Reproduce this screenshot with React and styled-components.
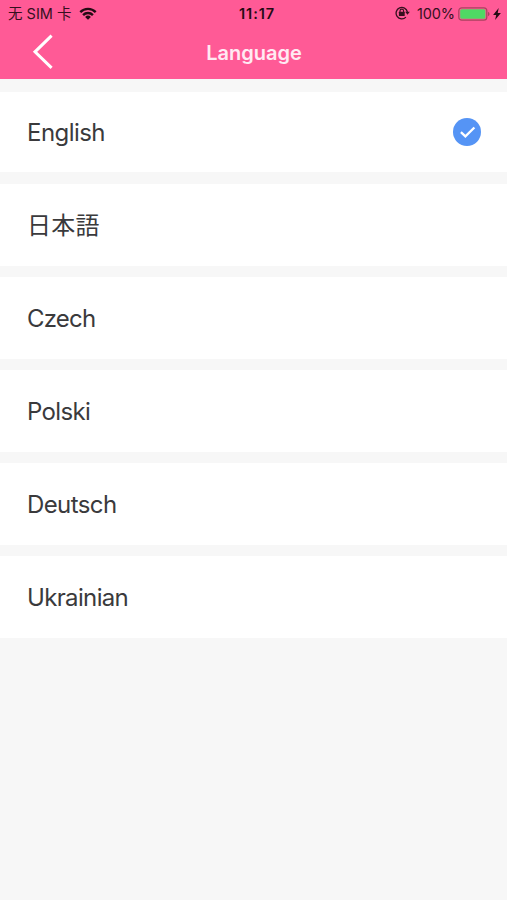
import React, { useState } from "react";
import styled, { createGlobalStyle } from "styled-components";

const languages = [
  { name: "English", tracking: "-0.55px" },
  { name: "日本語", tracking: "0.2px" },
  { name: "Czech", tracking: "-0.8px" },
  { name: "Polski", tracking: "-0.65px" },
  { name: "Deutsch", tracking: "-0.6px" },
  { name: "Ukrainian", tracking: "-0.65px" },
];

export default function App() {
  const [selected, setSelected] = useState("English");

  return (
    <Page>
      <GlobalStyle />
      <Header>
        <StatusBar>
          <Carrier>
            <span>无 SIM 卡</span>
            <WifiIcon />
          </Carrier>
          <Clock>11:17</Clock>
          <Power>
            <LockIcon />
            <span>100%</span>
            <BatteryIcon />
            <BoltIcon />
          </Power>
        </StatusBar>
        <NavBar>
          <BackButton aria-label="Back">
            <svg width="22" height="36" viewBox="0 0 22 36">
              <path
                d="M19.6 1.7 3 17.8 19.6 33.8"
                fill="none"
                stroke="#fff"
                strokeWidth="3"
              />
            </svg>
          </BackButton>
          <Title>Language</Title>
        </NavBar>
      </Header>
      <List>
        {languages.map(({ name, tracking }) => (
          <Row key={name} onClick={() => setSelected(name)}>
            <Label $tracking={tracking}>{name}</Label>
            {selected === name && <CheckIcon />}
          </Row>
        ))}
      </List>
    </Page>
  );
}

const WifiIcon = () => (
  <svg width="18" height="13" viewBox="0 0 18 13">
    <g fill="none" stroke="#240b14" strokeWidth="2.4">
      <path d="M1.3 5.1a10.9 10.9 0 0 1 15.4 0" />
      <path d="M4.1 8.1a6.9 6.9 0 0 1 9.8 0" />
    </g>
    <path d="M9 12.8 6.1 9.9a4.1 4.1 0 0 1 5.8 0z" fill="#240b14" />
  </svg>
);

const LockIcon = () => (
  <svg width="15" height="14" viewBox="0 0 15 14">
    <g fill="none" stroke="#35101e">
      <path d="M10.9 11.1A5.7 5.7 0 1 1 12.4 6" strokeWidth="1.3" />
      <path d="M5 6.2V4.9a1.8 1.8 0 0 1 3.6 0v1.3" strokeWidth="1.1" />
    </g>
    <path d="M10.2 5.8h4.6l-2.3 3z" fill="#35101e" />
    <rect x="3.9" y="5.8" width="5.8" height="4.2" rx="0.5" fill="#35101e" />
  </svg>
);

const BatteryIcon = () => (
  <svg width="32" height="14" viewBox="0 0 32 14">
    <rect
      x="0.8"
      y="0.8"
      width="28"
      height="12.4"
      rx="3"
      fill="none"
      stroke="#a9435f"
      strokeWidth="1.2"
    />
    <rect x="2.2" y="2.2" width="25.2" height="9.6" rx="1.6" fill="#4fd964" />
    <path d="M30 4.8q1.6.8 1.6 2.2T30 9.2z" fill="#a9435f" />
  </svg>
);

const BoltIcon = () => (
  <svg width="8" height="12" viewBox="0 0 8 12">
    <path d="M5.7.1.1 6.9h3.1L2.1 11.9 7.9 4.9H4.7z" fill="#240b14" />
  </svg>
);

const CheckIcon = () => (
  <svg width="28" height="28" viewBox="0 0 28 28">
    <circle cx="14" cy="14" r="14" fill="#5594f5" />
    <path
      d="M7.9 14.1 12.4 18.4 21.4 9.5"
      fill="none"
      stroke="#fff"
      strokeWidth="2.3"
    />
  </svg>
);

const GlobalStyle = createGlobalStyle`
  body {
    margin: 0;
    background: #f7f7f7;
  }
  * {
    box-sizing: border-box;
  }
  svg {
    display: block;
    flex-shrink: 0;
  }
`;

const Page = styled.div`
  min-height: 900px;
  background: #f7f7f7;
  font-family: Inter, "Noto Sans CJK SC", sans-serif;
`;

const Header = styled.header`
  height: 79px;
  background: #ff5a96;
`;

const StatusBar = styled.div`
  display: grid;
  grid-template-columns: 1fr auto 1fr;
  align-items: center;
  height: 27px;
  padding: 0 6px 0 8px;
  font-size: 14.5px;
  line-height: 27px;
  color: #35101e;
`;

const Carrier = styled.div`
  display: flex;
  align-items: center;
  gap: 7.5px;
`;

const Clock = styled.div`
  padding-left: 5px;
  font-weight: 600;
  letter-spacing: 0.9px;
  color: #240b14;
`;

const Power = styled.div`
  display: flex;
  align-items: center;
  justify-content: flex-end;
  span {
    margin: 0 3px 0 7px;
    letter-spacing: -0.1px;
  }
  svg:first-child {
    margin-bottom: 1px;
  }
  svg:last-child {
    margin-left: 3px;
  }
`;

const NavBar = styled.div`
  display: grid;
  grid-template-columns: 60px 1fr 60px;
  align-items: center;
  height: 50px;
`;

const BackButton = styled.button`
  padding: 0 0 2px 32px;
  border: 0;
  background: none;
  cursor: pointer;
`;

const Title = styled.h1`
  margin: 0;
  padding: 1px 0 0 1px;
  font-size: 20px;
  font-weight: 600;
  line-height: 50px;
  text-align: center;
  color: #ffeaf3;
`;

const List = styled.div`
  display: flex;
  flex-direction: column;
  gap: 11.4px;
  padding-top: 13px;
`;

const Row = styled.div`
  display: flex;
  align-items: center;
  justify-content: space-between;
  height: 81.6px;
  padding: 0 26px 0 27px;
  background: #fff;
  cursor: pointer;
  &:first-child {
    height: 80px;
    margin-bottom: 0.8px;
  }
`;

const Label = styled.span`
  padding-top: 2px;
  font-family: Inter, "Noto Sans CJK JP", sans-serif;
  font-size: 24px;
  line-height: 32px;
  letter-spacing: ${(props) => props.$tracking};
  color: #3a3a3c;
`;
